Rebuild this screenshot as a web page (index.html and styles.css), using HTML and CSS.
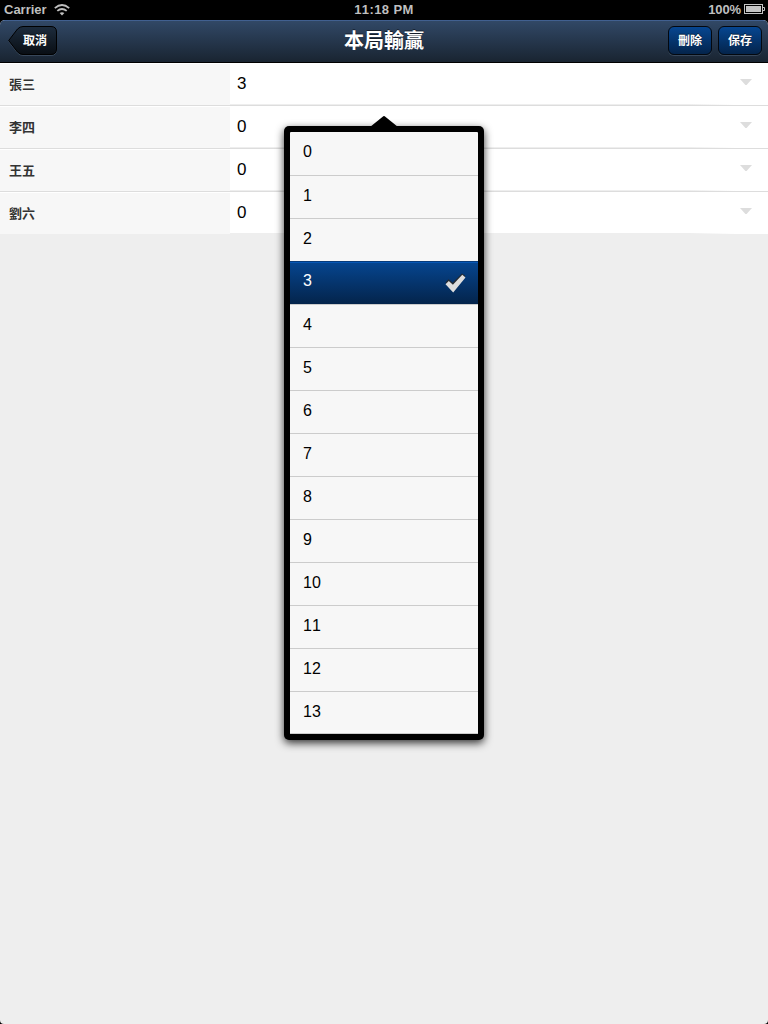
FILE: index.html
```html
<!DOCTYPE html>
<html lang="zh-Hant">
<head>
<meta charset="utf-8">
<title>本局輸贏</title>
<link rel="stylesheet" href="styles.css">
</head>
<body>
<div class="status">
  <div class="status-left"><span class="carrier">Carrier</span>
    <svg class="wifi" width="16" height="12" viewBox="0 0 16 12" fill="none" stroke="#bfbfbf" stroke-width="1.8"><path d="M.8 4.1Q8-2 15.2 4.1M3.3 6.9Q8 3 12.7 6.9"/><path d="M5.6 9.1Q8 7.2 10.4 9.1L8 11.6Z" fill="#bfbfbf" stroke="none"/></svg>
  </div>
  <div class="clock">11:18 PM</div>
  <div class="status-right"><span class="percent">100%</span>
    <svg class="battery" width="21" height="10" viewBox="0 0 21 10"><rect x=".5" y=".5" width="18" height="9" fill="none" stroke="#c4c4c4"/><rect x="2" y="2" width="15" height="6" fill="#c4c4c4"/><path d="M19 3.5h1.5v3H19" fill="none" stroke="#c4c4c4"/></svg>
  </div>
</div>
<div class="app">
  <header class="toolbar">
    <div class="side">
      <button class="back">
        <svg class="back-shape" width="51" height="31" viewBox="0 0 51 31">
          <defs><linearGradient id="bk" x1="0" y1="0" x2="0" y2="1"><stop offset="0" stop-color="#1d2c3d"/><stop offset="1" stop-color="#090e14"/></linearGradient></defs>
          <path d="M.7 14.5L9.5 3Q12 .5 15 .5H43Q48.5 .5 48.5 6V23Q48.5 28.5 43 28.5H15Q12 28.5 9.5 26Z" fill="none" stroke="#37475a" transform="translate(0 1)"/>
          <path d="M.7 14.5L9.5 3Q12 .5 15 .5H43Q48.5 .5 48.5 6V23Q48.5 28.5 43 28.5H15Q12 28.5 9.5 26Z" fill="url(#bk)" stroke="#000"/>
        </svg>
        <span class="back-label">取消</span>
      </button>
    </div>
    <h1 class="title">本局輸贏</h1>
    <div class="side side-end"><button class="action">刪除</button><button class="action">保存</button></div>
  </header>
  <main class="form">
    <div class="field"><label class="name">張三</label><div class="value">3<i class="caret"></i></div></div>
    <div class="field"><label class="name">李四</label><div class="value">0<i class="caret"></i></div></div>
    <div class="field"><label class="name">王五</label><div class="value">0<i class="caret"></i></div></div>
    <div class="field"><label class="name">劉六</label><div class="value">0<i class="caret"></i></div></div>
  </main>
</div>
<div class="popup">
  <svg class="tip" width="28" height="11" viewBox="0 0 28 11"><path d="M0 11L13.3 .2Q14-.1 14.7 .2L28 11Z"/></svg>
  <ul class="options">
    <li class="option">0</li><li class="option">1</li><li class="option">2</li>
    <li class="option selected">3
      <svg class="check" width="22" height="20" viewBox="0 0 22 20"><path d="M1.5 9.4L4.6 6.2L8.6 9.8L18 .5L21 2.5V4.2L9 18Z" fill="#242b33"/><path d="M1.5 11.2L4.8 7.9L8.9 11.7L18.3 1.7L21.5 4.6L9.2 19.6Z" fill="#dedede"/></svg>
    </li>
    <li class="option">4</li><li class="option">5</li><li class="option">6</li><li class="option">7</li><li class="option">8</li><li class="option">9</li><li class="option">10</li><li class="option">11</li><li class="option">12</li><li class="option">13</li>
  </ul>
</div>
</body>
</html>
```

FILE: styles.css
```css
* { box-sizing: border-box; }
body {
  margin: 0;
  width: 768px;
  height: 1024px;
  overflow: hidden;
  position: relative;
  background: #000;
  font-family: "Liberation Sans", "Noto Sans CJK TC", sans-serif;
  font-kerning: none;
}
.status {
  height: 20px;
  display: grid;
  grid-template-columns: 1fr auto 1fr;
  color: #bfbfbf;
  font-size: 13px;
  font-weight: bold;
  line-height: 19px;
}
.status-left, .status-right { display: flex; }
.status-left { padding-left: 4px; }
.carrier { width: 50px; }
.wifi { margin-top: 4px; }
.clock { letter-spacing: .4px; }
.status-right { justify-content: flex-end; padding-right: 3px; }
.percent { margin-right: 3px; letter-spacing: -.1px; }
.battery { margin-top: 4px; }
.app {
  height: 1004px;
  background: #eee;
  border-radius: 5px 5px 4px 4px;
  overflow: hidden;
}
.toolbar {
  height: 43px;
  display: grid;
  grid-template-columns: 1fr auto 1fr;
  background: linear-gradient(#314866, #192431);
  border-top: 1px solid #416090;
  border-bottom: 1px solid #000;
}
.side { display: flex; padding: 5px 6px 0 8px; }
.side-end { justify-content: flex-end; gap: 6px; }
.title {
  margin: 0;
  color: #fff;
  font-size: 20px;
  font-weight: bold;
  line-height: 41px;
  text-shadow: 0 -1px 0 rgba(0, 0, 0, .5);
}
.back, .action {
  padding: 0;
  border: 0;
  color: #fff;
  font: bold 12px/30px "Liberation Sans", "Noto Sans CJK TC", sans-serif;
  text-shadow: 0 -1px 0 rgba(0, 0, 0, .6);
}
.back { display: grid; width: 51px; height: 31px; background: none; }
.back-shape, .back-label { grid-area: 1 / 1; }
.back-label { z-index: 1; padding-left: 3px; }
.action {
  width: 44px;
  height: 29px;
  border: 1px solid #03080f;
  border-radius: 6px;
  line-height: 28px;
  background: linear-gradient(#064691, #04244b);
  box-shadow: 0 1px 0 #37475a;
}
.field {
  height: 43px;
  display: grid;
  grid-template: 42px / 230px 1fr;
  border-bottom: 1px solid #ddd;
  background: #fff;
}
.field:last-child { border-bottom-color: #eee; }
.name {
  margin-top: 1px;
  padding-left: 9px;
  background: #f7f7f7;
  color: #333;
  font-size: 13px;
  font-weight: bold;
  line-height: 41px;
}
.value {
  display: flex;
  justify-content: space-between;
  padding: 0 16px 0 7px;
  font-size: 17px;
  line-height: 41px;
  background: linear-gradient(90deg, #eee 0 460px, #fff 505px) 0 100% / 100% 1px no-repeat #fff;
}
.caret {
  width: 12px;
  height: 6px;
  margin-top: 16px;
  background: #ddd;
  clip-path: polygon(0 0, 100% 0, 55% 100%, 45% 100%);
}
.popup {
  position: absolute;
  left: 284px;
  top: 126px;
  width: 200px;
  padding: 6px;
  background: #000;
  border-radius: 5px;
  box-shadow: 0 3px 8px rgba(0, 0, 0, .8);
}
.tip { position: absolute; left: 86px; top: -10px; }
.options {
  margin: 0;
  padding: 0;
  list-style: none;
  background: #f7f7f7;
  border-radius: 1px;
}
.option {
  height: 43px;
  padding: 0 13px;
  border-top: 1px solid #ccc;
  font-size: 16px;
  line-height: 40px;
}
.option:first-child { border-top: 0; }
.option:last-child { box-shadow: inset 0 -1px 0 #ccc; }
.selected {
  display: flex;
  justify-content: space-between;
  padding-right: 12px;
  border-top: 0;
  color: #fff;
  background: linear-gradient(#064691, #04244b);
  box-shadow: inset 0 1px 0 #073b7b, inset 0 2px 0 #0757b5;
}
.check { margin-top: 12px; }
```
